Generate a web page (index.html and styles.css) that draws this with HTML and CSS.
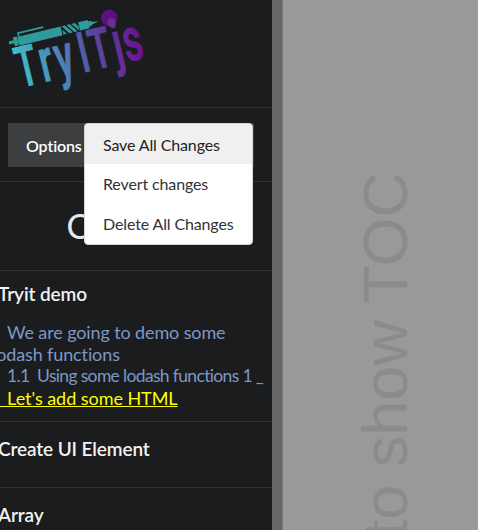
FILE: index.html
```html
<!DOCTYPE html>
<html lang="en">
<head>
<meta charset="utf-8">
<title>TryITjs</title>
<link rel="stylesheet" href="styles.css">
</head>
<body>
<div class="app">
  <nav class="sidebar">
    <div class="brand">
      <svg class="logo" width="160" height="107" viewBox="0 0 160 107">
        <defs>
          <linearGradient id="ink" gradientUnits="userSpaceOnUse" x1="-16" y1="0" x2="189" y2="0">
            <stop offset="0" stop-color="#40bfc8"/>
            <stop offset=".22" stop-color="#4798bd"/>
            <stop offset=".42" stop-color="#5076b5"/>
            <stop offset=".6" stop-color="#554fa3"/>
            <stop offset=".8" stop-color="#64309a"/>
            <stop offset="1" stop-color="#6c1090"/>
          </linearGradient>
        </defs>
        <circle cx="109.300" cy="18" r="8.300" fill="#5e117d"/>
        <text class="wordmark" transform="translate(31 85) rotate(-13.5) scale(.62 1)" fill="url(#ink)" stroke="url(#ink)"><tspan x="0">T</tspan><tspan class="lower" x="32">r</tspan><tspan class="lower" x="62">y</tspan><tspan x="94">I</tspan><tspan x="122">T</tspan><tspan class="lower" x="151">j</tspan><tspan class="lower" x="175">s</tspan></text>
        <circle cx="111.300" cy="22.500" r="4" fill="#653193"/>
        <g transform="translate(9 43) rotate(-13.500)" fill="#309b9c">
          <path d="M0-1.500h5v-3h4v9h-4v-3H0z"/>
          <path d="M10-4h44v9H10q-2-4.500 0-9z"/>
          <path d="M11-3.500v-4h26" fill="none" stroke="#309b9c" stroke-width="1.700"/>
          <path d="M55-4h3.500l6 8.500h-3.500zM60-4h3.500l6 8.500h-3.500zM65-4h3.500l3 4v4h-.5zM55-.5l3.500 5h-3.500z"/>
          <path d="M72-4h10v1.500h3v1l7 1.500-7 1.500v1h-3v2h-10z"/>
        </g>
      </svg>
    </div>
    <div class="options">
      <div class="options-button"><span>Options</span>
        <div class="menu">
          <div class="menu-item active">Save All Changes</div>
          <div class="menu-item">Revert changes</div>
          <div class="menu-item">Delete All Changes</div>
        </div>
      </div>
    </div>
    <h1 class="title">Contents</h1>
    <section class="chapter open">
      <h2>Tryit demo</h2>
      <a class="topic first">We are going to demo some<br><span class="wrapped">lodash functions</span></a>
      <a class="topic sub">1.1&nbsp; Using some lodash functions 1 _</a>
      <a class="topic current">&nbsp;&nbsp;Let's add some HTML</a>
    </section>
    <section class="chapter closed"><h2>Create UI Element</h2></section>
    <section class="chapter closed"><h2>Array</h2></section>
  </nav>
  <div class="divider"></div>
  <main class="backdrop"><div class="hint">to show TOC</div></main>
</div>
</body>
</html>
```

FILE: styles.css
```css
* { box-sizing: border-box; }
body { margin: 0; font-family: Lato, sans-serif; font-variant-ligatures: none; overflow: hidden; }
.app { display: flex; width: 478px; height: 530px; overflow: hidden; background: #999; }
.sidebar { width: 272px; flex: none; background: #1b1c1d; color: #fff; }
.brand { height: 108px; border-bottom: 1px solid #303132; }
.logo { display: block; }
.wordmark { font: 500 56px Roboto, sans-serif; text-anchor: middle; stroke-width: 1.1px; }
.lower { font-size: 60px; }
.options { height: 74px; padding: 15px 18px 14px 8px; border-bottom: 1px solid #303132; }
.options-button { position: relative; height: 44px; padding-left: 18px; background: #3d3e3f; font-size: 16px; font-weight: 600; letter-spacing: -.12px; line-height: 46px; }
.menu { position: absolute; z-index: 2; left: 76px; top: 0; width: 169px; height: 122px; border: 1px solid #d4d4d5; border-radius: 4px; background: #fff; overflow: hidden; letter-spacing: -.13px; }
.menu-item { height: 40px; padding-left: 18px; font-size: 16px; font-weight: 400; line-height: 40px; color: #333; white-space: nowrap; }
.menu-item.active { background: #f0f0f0; color: #222; line-height: 42px; }
.title { height: 89px; margin: 0; padding-right: 3px; border-bottom: 1px solid #303132; font-size: 34px; font-weight: 400; line-height: 87px; text-align: center; color: #e8e8e8; }
.chapter { border-bottom: 1px solid #303132; overflow: hidden; }
.chapter h2 { margin: 0 0 0 -2px; padding-top: 11px; font-size: 19px; font-weight: 600; letter-spacing: -.12px; line-height: 24px; color: #f2f2f2; }
.open { height: 151px; }
.closed { height: 66px; }
.closed h2 { padding-top: 15px; }
.topic { display: block; padding-left: 7px; font-size: 18px; letter-spacing: -.12px; line-height: 22px; color: #7b98c8; white-space: nowrap; }
.first { margin-top: 15px; }
.wrapped { margin-left: -15px; }
.sub { font-size: 17.500px; letter-spacing: -.66px; line-height: 21px; }
.current { padding-left: 0; margin-left: -2px; color: #ff0; text-decoration: underline; letter-spacing: -.05px; line-height: 24px; }
.divider { width: 11px; flex: none; background: #666769; border-right: 1px solid #777; }
.backdrop { flex: 1; padding: 172px 0 0 70px; overflow: hidden; }
.hint { writing-mode: vertical-rl; transform: rotate(180deg); width: 64px; font: 63px/64px "Liberation Sans", Arial, sans-serif; color: #8b8b8b; white-space: nowrap; }
```
